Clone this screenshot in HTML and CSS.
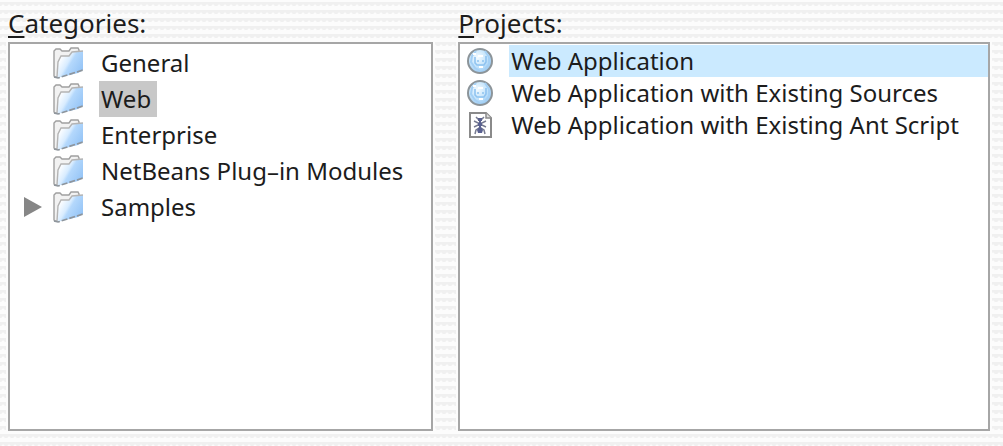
FILE: index.html
```html
<!DOCTYPE html>
<html lang="en">
<head>
    <meta charset="UTF-8">
    <meta name="viewport" content="width=device-width, initial-scale=1.0">
    <title>New Project</title>
    <link rel="stylesheet" href="styles.css">
</head>
<body>
    <!-- shared icons -->
    <svg class="sprite" aria-hidden="true">
        <defs>
            <linearGradient id="folderBlue" x1="0" y1="0.1" x2="1" y2="0.7">
                <stop offset="0.15" stop-color="#ffffff"/>
                <stop offset="0.45" stop-color="#d8ecff"/>
                <stop offset="0.55" stop-color="#b4d8fc"/>
                <stop offset="1" stop-color="#93c3f6"/>
            </linearGradient>
            <radialGradient id="globeBlue" cx="0.4" cy="0.35" r="0.65">
                <stop offset="0" stop-color="#f4fbff"/>
                <stop offset="0.6" stop-color="#c3e3fb"/>
                <stop offset="1" stop-color="#9ccbf3"/>
            </radialGradient>
        </defs>
        <symbol id="folder" viewBox="0 0 32 32">
            <path d="M2 29V4L4 2H8L10 4H17L19 1H26L27 3V10L7 30H3Z" fill="#f2f2f2" stroke="#a0a0a0" stroke-width="1.4"/>
            <path d="M5 31L6 15L9 9H17L20 5L31 4V23L26 26Z" fill="url(#folderBlue)"/>
            <path d="M5 30L6 15L9 9H17L20 5L31 4" fill="none" stroke="#b4b4b4" stroke-width="1.4"/>
            <path d="M2 30L6 31L31 23" fill="none" stroke="#8e959c" stroke-width="1.6" stroke-dasharray="6 2"/>
        </symbol>
        <symbol id="globe" viewBox="0 0 26 26">
            <circle cx="13" cy="13" r="12" fill="url(#globeBlue)" stroke="#8c9499" stroke-width="2"/>
            <path d="M9 3L5 8L4 14L8 20L13 23M18 3L22 9V16L18 21" fill="none" stroke="#a4d0f5" stroke-width="2"/>
            <path d="M8 9V15L10 17H17L19 14V8M10 13H12M15 13H17" fill="none" stroke="#8fc3f0" stroke-width="1.6"/>
            <path d="M11 8H16M6 6H9M12 19H16" fill="none" stroke="#ffffff" stroke-width="2"/>
        </symbol>
        <symbol id="ant" viewBox="0 0 26 26">
            <path d="M3 1H19L24 6V25H3Z" fill="#ffffff" stroke="#8a8a8a" stroke-width="2"/>
            <path d="M19 1V6H24" fill="#dddddd" stroke="#8a8a8a" stroke-width="1.5"/>
            <path d="M9 5L12 8M17 5L14 8M7 9L11 11H15L19 9M7 15L11 13H15L19 15M8 22L9 18L12 16M18 22L17 18L14 16" fill="none" stroke="#777b91" stroke-width="1.5"/>
            <path d="M11 6H15V9H14V11H15V14H14V15L16 18L15 21H11L10 18L12 15V14H11V11H12V9H11Z" fill="#5a6190"/>
        </symbol>
    </svg>

    <main class="chooser">
        <section class="pane">
            <h2 class="pane-title" id="categories"><u>C</u>ategories:</h2>
            <ul class="list categories" aria-labelledby="categories">
                <li class="row">
                    <svg class="folder" aria-hidden="true"><use href="#folder"/></svg>
                    <button type="button" class="item">General</button>
                </li>
                <li class="row">
                    <svg class="folder" aria-hidden="true"><use href="#folder"/></svg>
                    <button type="button" class="item selected" aria-pressed="true">Web</button>
                </li>
                <li class="row">
                    <svg class="folder" aria-hidden="true"><use href="#folder"/></svg>
                    <button type="button" class="item">Enterprise</button>
                </li>
                <li class="row">
                    <svg class="folder" aria-hidden="true"><use href="#folder"/></svg>
                    <button type="button" class="item">NetBeans Plug–in Modules</button>
                </li>
                <li class="row">
                    <button type="button" class="expand" aria-label="Expand Samples" aria-expanded="false">
                        <svg class="arrow" viewBox="0 0 18 20" aria-hidden="true"><path d="M0 0L18 10L0 20Z" fill="#868686"/></svg>
                    </button>
                    <svg class="folder" aria-hidden="true"><use href="#folder"/></svg>
                    <button type="button" class="item">Samples</button>
                </li>
            </ul>
        </section>

        <section class="pane">
            <h2 class="pane-title" id="projects"><u>P</u>rojects:</h2>
            <ul class="list projects" aria-labelledby="projects">
                <li class="row">
                    <svg class="type" aria-hidden="true"><use href="#globe"/></svg>
                    <button type="button" class="item selected" aria-pressed="true">Web Application</button>
                </li>
                <li class="row">
                    <svg class="type" aria-hidden="true"><use href="#globe"/></svg>
                    <button type="button" class="item">Web Application with Existing Sources</button>
                </li>
                <li class="row">
                    <svg class="type" aria-hidden="true"><use href="#ant"/></svg>
                    <button type="button" class="item">Web Application with Existing Ant Script</button>
                </li>
            </ul>
        </section>
    </main>
</body>
</html>
```
FILE: styles.css
```css
* {
    box-sizing: border-box;
}

body {
    margin: 0;
    font-family: "Lucida Grande", "Noto Sans", sans-serif;
    font-size: 24px;
    color: #1c1c1c;
    background-color: #fcfcfc;
    /* pinstripes with a scalloped edge */
    background-image:
        radial-gradient(circle, #fcfcfc 1px, transparent 2px),
        linear-gradient(#fcfcfc 2px, #f0f0f0 2px, #f0f0f0 6px, #fcfcfc 6px);
    background-size: 6px 8px, 8px 8px;
    background-position: 0 2px, 0 0;
}

/* must stay rendered so that the gradients resolve */
.sprite {
    position: absolute;
    width: 0;
    height: 0;
}

.chooser {
    display: grid;
    grid-template-columns: 4fr 5fr;
    gap: 25px;
    min-height: 100vh;
    padding: 4px 13px 15px 8px;
}

.pane {
    display: flex;
    flex-direction: column;
    min-width: 0;
}

.pane-title {
    margin: 0;
    font-size: 26px;
    font-weight: normal;
    line-height: 38px;
}

.pane-title u {
    text-decoration-thickness: 2px;
    text-underline-offset: 3px;
}

.list {
    flex: 1;
    margin: 0;
    padding: 1px 0;
    list-style: none;
    background-color: #fff;
    border: 2px solid #a6a6a6;
    outline: 2px solid #fcfcfc;
}

.row {
    display: flex;
    align-items: center;
}

.item {
    padding: 0 2px;
    border: none;
    background: none;
    font: inherit;
    color: inherit;
    text-align: left;
    cursor: pointer;
}

.categories .row {
    position: relative;
    height: 36px;
    padding-left: 42px;
}

.categories .item {
    padding-right: 6px;
    line-height: 36px;
}

.categories .selected {
    background-color: #c8c8c8;
}

.folder {
    width: 32px;
    height: 32px;
    margin-right: 15px;
}

.expand {
    position: absolute;
    left: 14px;
    padding: 0;
    border: none;
    background: none;
    cursor: pointer;
}

.arrow {
    display: block;
    width: 18px;
    height: 20px;
}

.projects .row {
    height: 32px;
    padding-left: 7px;
}

.projects .item {
    flex: 1;
    line-height: 32px;
    white-space: nowrap;
}

.projects .selected {
    background-color: #cbeaff;
}

.type {
    width: 26px;
    height: 26px;
    margin-right: 16px;
}
```
